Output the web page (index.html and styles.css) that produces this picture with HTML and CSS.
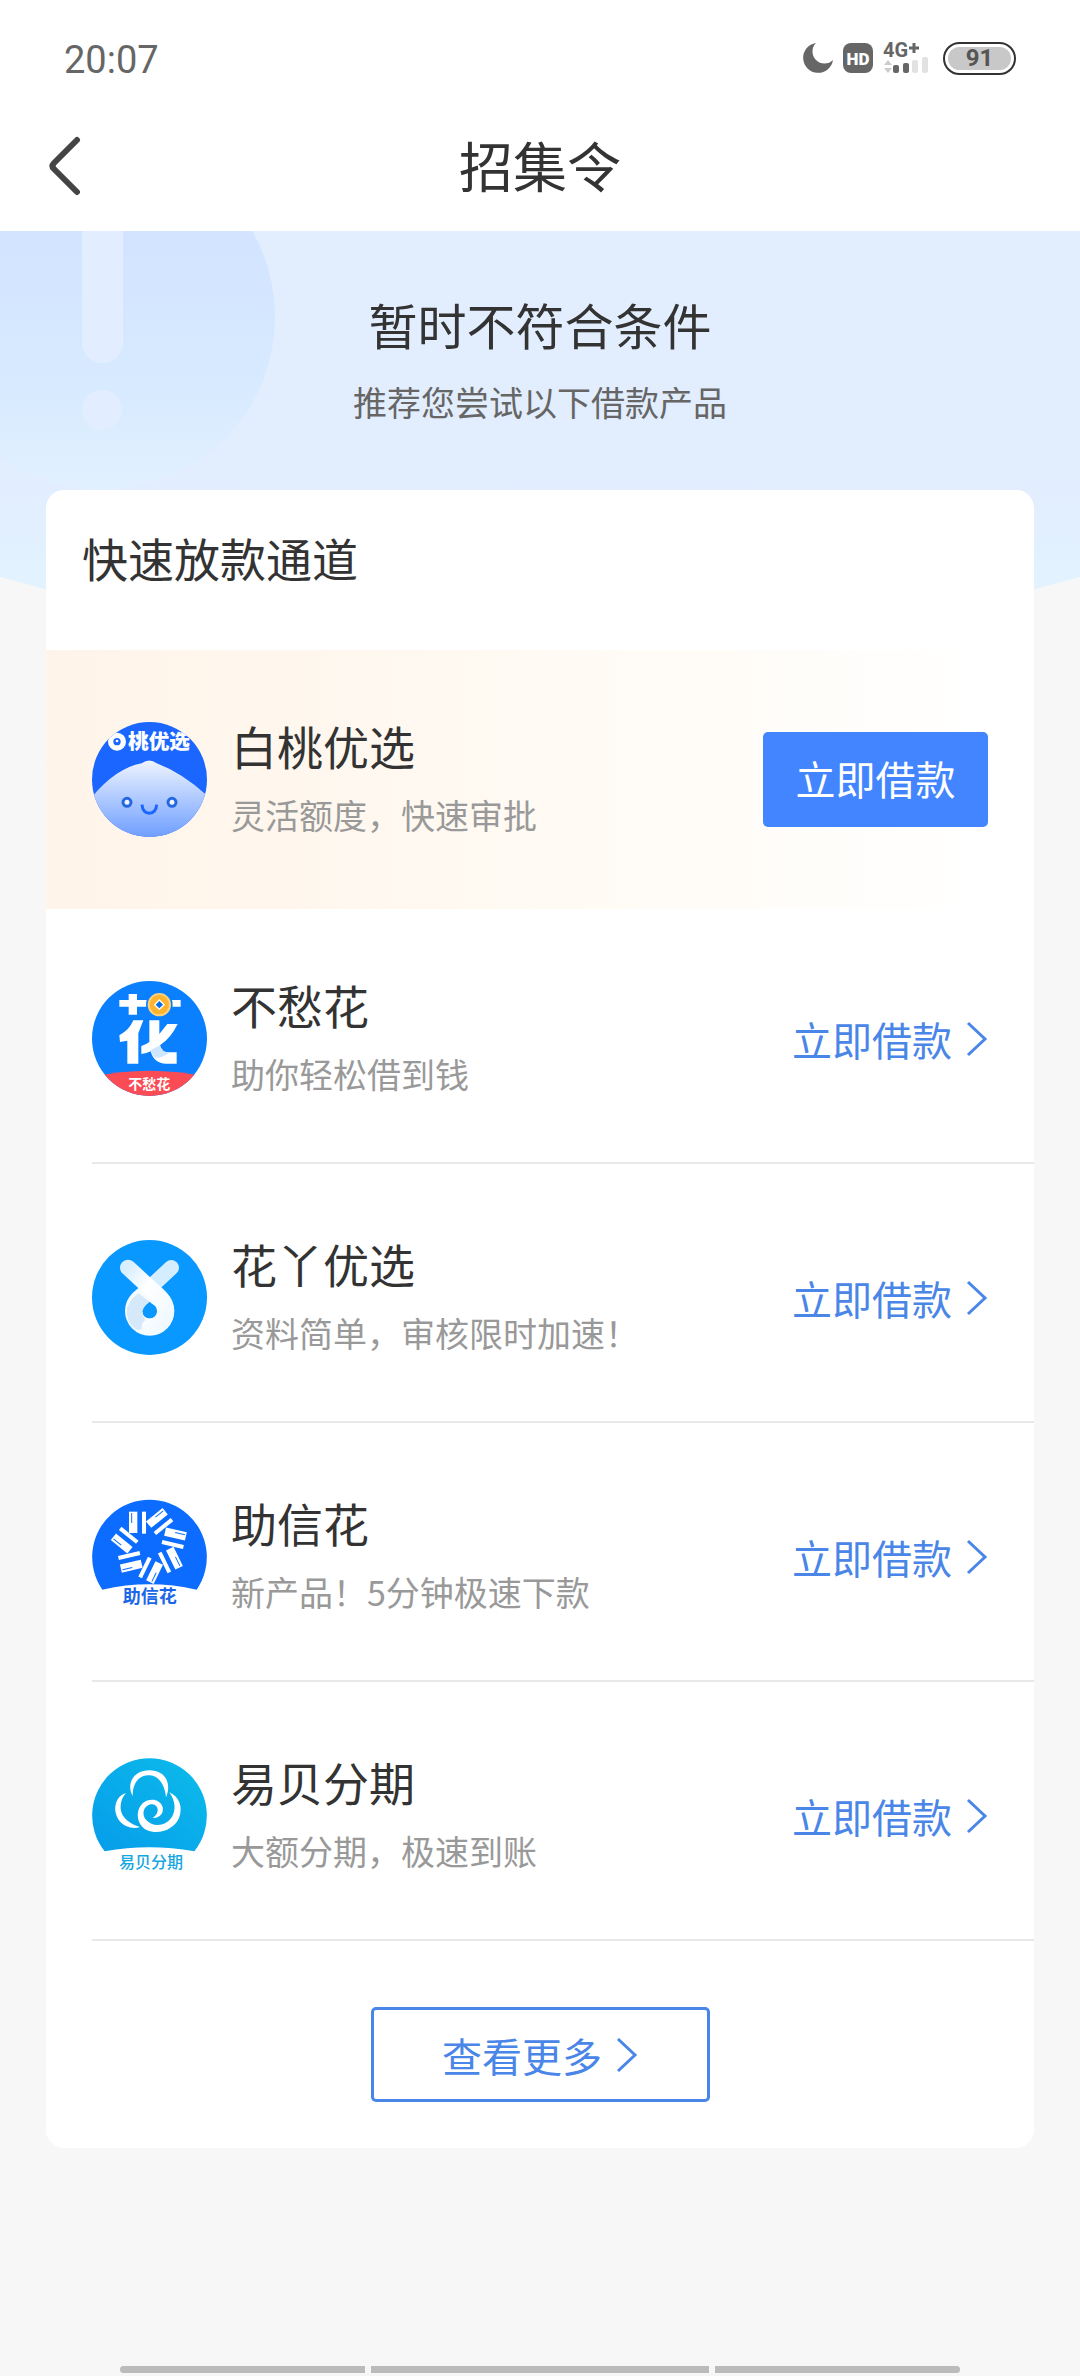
FILE: index.html
```html
<!DOCTYPE html>
<html lang="zh-CN">
<head>
  <meta charset="UTF-8">
  <meta name="viewport" content="width=device-width, initial-scale=1.0">
  <title>招集令</title>
  <link rel="stylesheet" href="styles.css">
</head>
<body>

  <div class="status-bar">
    <div class="time">20:07</div>
    <div class="status-icons">
      <svg width="30" height="30" viewBox="0 0 30 30">
        <path d="M13 0A15 15 0 1 0 30 17A12 12 0 0 1 13 0Z" fill="#666"/>
      </svg>
      <svg width="30" height="30" viewBox="0 0 30 30">
        <rect width="30" height="30" rx="8" fill="#666"/>
        <text x="15" y="22" class="hd">HD</text>
      </svg>
      <svg width="50" height="40" viewBox="0 -4 50 40">
        <text x="0" y="15" class="net">4G</text>
        <path d="M31 1v10M26 6h10" stroke="#666" stroke-width="3"/>
        <path d="M1 23L5 18L9 23ZM1 26L5 31L9 26Z" fill="#ccc"/>
        <g fill="#666">
          <rect x="10" y="23" width="6" height="8" rx="2"/>
          <rect x="20" y="21" width="6" height="10" rx="2"/>
        </g>
        <g fill="#e2e2e2">
          <rect x="29" y="18" width="6" height="13" rx="2"/>
          <rect x="39" y="15" width="6" height="16" rx="2"/>
        </g>
      </svg>
      <div class="battery"><span>91</span></div>
    </div>
  </div>

  <header class="nav">
    <button class="back" aria-label="返回">
      <svg width="34" height="62" viewBox="0 0 34 62">
        <path d="M29 5L6 28Q3 31 6 34L29 57" fill="none" stroke="#444" stroke-width="6" stroke-linecap="round"/>
      </svg>
    </button>
    <h1>招集令</h1>
  </header>

  <section class="hero">
    <svg class="hero-mark" width="280" height="260" viewBox="0 0 280 260">
      <defs>
        <linearGradient id="mark" x1="0" y1="0" x2="0" y2="1">
          <stop offset="0.3" stop-color="#d2e4ff"/>
          <stop offset="0.75" stop-color="#d9ebff"/>
          <stop offset="1" stop-color="#e2f0ff"/>
        </linearGradient>
      </defs>
      <circle cx="102" cy="86" r="173" fill="url(#mark)"/>
      <rect x="82" y="-40" width="41" height="172" rx="20" fill="#e2eeff"/>
      <circle cx="102" cy="179" r="20" fill="#e2eeff"/>
    </svg>
    <h2>暂时不符合条件</h2>
    <p>推荐您尝试以下借款产品</p>
  </section>

  <main class="card">
    <h3>快速放款通道</h3>
    <ul class="list">
      <li class="item hot">
        <svg class="logo" viewBox="36 36 345 345">
          <defs>
            <clipPath id="c1"><circle cx="208.500" cy="208.500" r="172.500"/></clipPath>
            <linearGradient id="peach" x1="0" y1="0" x2="0" y2="1">
              <stop offset="0" stop-color="#eef4ff"/>
              <stop offset="1" stop-color="#6a9bff"/>
            </linearGradient>
          </defs>
          <g clip-path="url(#c1)">
            <rect x="36" y="36" width="345" height="345" fill="#1b66ff"/>
            <path d="M30 268Q105 175 185 160Q208 143 230 160Q310 190 390 265V390H30Z" fill="url(#peach)"/>
            <circle cx="111" cy="95" r="19" fill="none" stroke="#fff" stroke-width="16"/>
            <circle cx="111" cy="93" r="4" fill="#fff"/>
            <text x="144" y="116" class="logo-text white heavy" font-size="62">桃优选</text>
            <circle cx="141" cy="277" r="12" fill="#f2f6ff" stroke="#2468e0" stroke-width="9"/>
            <circle cx="276" cy="277" r="12" fill="#f2f6ff" stroke="#2468e0" stroke-width="9"/>
            <path d="M186 284Q188 309 208 310Q228 309 230 284" fill="none" stroke="#1b66ff" stroke-width="9"/>
          </g>
        </svg>
        <div class="info">
          <div class="name">白桃优选</div>
          <div class="desc">灵活额度，快速审批</div>
        </div>
        <button class="btn">立即借款</button>
      </li>
      <li class="item">
        <svg class="logo" viewBox="36 33 345 345">
          <defs><clipPath id="c2"><circle cx="208.500" cy="205.500" r="172.500"/></clipPath></defs>
          <g clip-path="url(#c2)">
            <rect x="36" y="33" width="345" height="345" fill="#0a80ff"/>
            <path d="M36 320Q208 284 381 320V380H36Z" fill="#fb4b55"/>
            <path d="M118 90H146V72H171V90H302V110H171V134H146V110H118Z" fill="#fff"/>
            <path d="M160 151H190L175 190V281H142V212L120 216L118 196Q148 180 160 151Z" fill="#fff"/>
            <path d="M208 151H238V192L262 162H293Q272 205 240 226Q244 247 262 247H290V281H258Q222 281 212 244Q200 250 184 252V228Q198 224 208 216Z" fill="#fff"/>
            <path d="M212 240L240 226Q246 247 268 248Q240 268 224 262Q216 254 212 240Z" fill="#cfe6ff"/>
            <circle cx="238" cy="104" r="40" fill="#0a80ff"/>
            <circle cx="238" cy="104" r="32" fill="#ffb32e" stroke="#ffd27a" stroke-width="6"/>
            <path d="M238 90L252 104L238 118L224 104Z" fill="#0a6fe0" stroke="#fff" stroke-width="4"/>
            <text x="208" y="356" class="logo-text white mid" font-size="42">不愁花</text>
          </g>
        </svg>
        <div class="info">
          <div class="name">不愁花</div>
          <div class="desc">助你轻松借到钱</div>
        </div>
        <button class="link">立即借款
          <svg class="arrow" viewBox="0 0 22 38"><path d="M2 3L19 19L2 35"/></svg>
        </button>
      </li>
      <li class="item">
        <svg class="logo" viewBox="36 30 345 345">
          <defs>
            <linearGradient id="band" x1="0" y1="0" x2="1" y2="1">
              <stop offset="0" stop-color="#d8efff"/>
              <stop offset="0.4" stop-color="#fff"/>
              <stop offset="1" stop-color="#f0f9ff"/>
            </linearGradient>
          </defs>
          <circle cx="208.500" cy="202.500" r="172.500" fill="#0898ff"/>
          <path d="M274 113L175 205" stroke="#d4edff" stroke-width="46" stroke-linecap="round"/>
          <circle cx="209" cy="243" r="48" fill="none" stroke="#f5fbff" stroke-width="52"/>
          <path d="M175 190Q140 215 140 250Q145 290 175 300Q215 292 235 262L209 281Q188 270 188 243Q195 225 209 215Z" fill="#d6e9fb"/>
          <path d="M144 113L222 185Q257 212 257 243A48 48 0 0 1 209 291" fill="none" stroke="url(#band)" stroke-width="48" stroke-linecap="round"/>
          <path d="M209 215Q230 232 230 244A21 21 0 0 1 188 244Q188 232 209 215Z" fill="#0898ff"/>
        </svg>
        <div class="info">
          <div class="name">花丫优选</div>
          <div class="desc">资料简单，审核限时加速！</div>
        </div>
        <button class="link">立即借款
          <svg class="arrow" viewBox="0 0 22 38"><path d="M2 3L19 19L2 35"/></svg>
        </button>
      </li>
      <li class="item">
        <svg class="logo" viewBox="36 30 345 345">
          <defs>
            <g id="petal">
              <path d="M-62 -100H-37V-36H-62Z"/>
              <path d="M-23 -100H-11V-34H-23Z"/>
              <path d="M-54 -96V-66" stroke="#0b6cff" stroke-width="3"/>
            </g>
          </defs>
          <path d="M67 302A172 172 0 1 1 350 302Q208 270 67 302Z" fill="#0b6cff"/>
          <g fill="#fff">
            <use href="#petal" transform="translate(209 168)"/>
            <use href="#petal" transform="translate(209 168) rotate(51)"/>
            <use href="#petal" transform="translate(209 168) rotate(103)"/>
            <use href="#petal" transform="translate(209 168) rotate(154)"/>
            <use href="#petal" transform="translate(209 168) rotate(206)"/>
            <use href="#petal" transform="translate(209 168) rotate(257)"/>
            <use href="#petal" transform="translate(209 168) rotate(309)"/>
          </g>
          <text x="209" y="342" class="logo-text mid" font-size="54" fill="#1b66e8">助信花</text>
        </svg>
        <div class="info">
          <div class="name">助信花</div>
          <div class="desc">新产品！5分钟极速下款</div>
        </div>
        <button class="link">立即借款
          <svg class="arrow" viewBox="0 0 22 38"><path d="M2 3L19 19L2 35"/></svg>
        </button>
      </li>
      <li class="item">
        <svg class="logo" viewBox="36 42 345 345">
          <defs>
            <linearGradient id="sky" x1="1" y1="0" x2="0" y2="1">
              <stop offset="0" stop-color="#0cbcea"/>
              <stop offset="1" stop-color="#069cea"/>
            </linearGradient>
          </defs>
          <path d="M74 322A172 172 0 1 1 343 322Q208 298 74 322Z" fill="url(#sky)"/>
          <g fill="#fff">
            <path d="M158 156C138 120 160 79 208 79C256 79 276 118 258 160C256 130 240 94 207 94C172 94 158 122 158 156Z"/>
            <path d="M138 147C95 160 95 225 138 246C153 253 168 253 180 249C150 240 125 222 122 195C121 173 128 158 138 147Z"/>
            <path d="M218 222C238 224 252 208 248 190C242 166 212 161 193 174C164 194 168 242 200 258C235 274 281 258 297 222C310 190 298 158 268 145C286 170 289 198 275 220C255 250 215 250 196 225C182 202 198 180 217 181C237 183 240 208 218 222Z"/>
          </g>
          <text x="213" y="372" class="logo-text mid light" font-size="48" fill="#16a6e0">易贝分期</text>
        </svg>
        <div class="info">
          <div class="name">易贝分期</div>
          <div class="desc">大额分期，极速到账</div>
        </div>
        <button class="link">立即借款
          <svg class="arrow" viewBox="0 0 22 38"><path d="M2 3L19 19L2 35"/></svg>
        </button>
      </li>
    </ul>
    <button class="more">查看更多
      <svg class="arrow" viewBox="0 0 22 38"><path d="M2 3L19 19L2 35"/></svg>
    </button>
  </main>

  <div class="gesture-bar">
    <span></span><span class="wide"></span><span></span>
  </div>

</body>
</html>
```
FILE: styles.css
```css
* {
  margin: 0;
  padding: 0;
  box-sizing: border-box;
}

body {
  display: flex;
  flex-direction: column;
  min-height: 100vh;
  background: #f7f7f7;
  color: #333;
  font-family: "Noto Sans CJK SC", sans-serif;
}

h1, h2, h3 {
  font-weight: 400;
}

button {
  border: none;
  background: none;
  font: inherit;
  cursor: pointer;
}

svg {
  display: block;
  flex-shrink: 0;
}

/* status bar */
.status-bar {
  display: flex;
  justify-content: space-between;
  align-items: center;
  height: 116px;
  padding: 0 64px;
  background: #fff;
}

.time {
  font-family: Roboto, sans-serif;
  font-size: 38px;
  line-height: 44px;
  padding-top: 4px;
  color: #666;
}

.status-icons {
  display: flex;
  align-items: center;
  gap: 10px;
}

.hd {
  font: 900 17px Roboto, sans-serif;
  fill: #fff;
  text-anchor: middle;
}

.net {
  font: 700 20px Roboto, sans-serif;
  fill: #666;
}

.battery {
  width: 73px;
  height: 33px;
  padding: 3px;
  border: 2px solid #333;
  border-radius: 17px;
}

.battery span {
  display: block;
  border-radius: 12px;
  background: #c8c8c8;
  color: #555;
  font: 700 24px/23px Roboto, sans-serif;
  text-align: center;
}

/* title bar */
.nav {
  position: relative;
  display: flex;
  justify-content: center;
  align-items: center;
  height: 115px;
  padding-bottom: 18px;
  background: #fff;
}

.nav h1 {
  font-size: 54px;
  line-height: 80px;
}

.back {
  position: absolute;
  left: 48px;
  top: 19px;
}

/* hero */
.hero {
  position: relative;
  height: 416px;
  padding-top: 58px;
  background: linear-gradient(#e2edfe 60%, #e2f3ff 85%);
  clip-path: ellipse(90% 100% at 50% 0);
  text-align: center;
}

.hero-mark {
  position: absolute;
  left: 0;
  top: 0;
}

.hero h2 {
  position: relative;
  font-size: 49px;
  line-height: 70px;
}

.hero p {
  position: relative;
  margin-top: 18px;
  font-size: 34px;
  line-height: 50px;
  color: #666;
}

/* product card */
.card {
  position: relative;
  margin: -157px 46px 46px;
  padding-bottom: 46px;
  border-radius: 18px;
  background: #fff;
}

.card h3 {
  padding: 32px 36px 58px;
  font-size: 46px;
  line-height: 70px;
}

.list {
  list-style: none;
}

.item {
  display: flex;
  align-items: center;
  margin: 0 0 4px 46px;
  padding: 72px 46px 66px 0;
  border-bottom: 2px solid #e8e8e8;
}

.item.hot {
  margin: 0;
  padding: 72px 46px;
  border-bottom: none;
  background: linear-gradient(90deg, #fff4e9, #fffaf3 50%, #fff 96%);
}

.logo {
  width: 115px;
  height: 115px;
}

.logo-text {
  font-family: "Noto Sans CJK SC", sans-serif;
  font-weight: 700;
}

.logo-text.heavy {
  font-weight: 900;
}

.logo-text.light {
  font-weight: 500;
}

.logo-text.white {
  fill: #fff;
}

.logo-text.mid {
  text-anchor: middle;
}

.info {
  flex: 1;
  margin-left: 24px;
}

.name {
  font-size: 46px;
  line-height: 46px;
}

.desc {
  margin-top: 24px;
  font-size: 34px;
  line-height: 45px;
  color: #999;
}

.btn {
  width: 225px;
  height: 95px;
  padding-bottom: 4px;
  border-radius: 5px;
  background: #4285ff;
  color: #fff;
  font-size: 40px;
  line-height: 60px;
}

.link,
.more {
  display: flex;
  justify-content: center;
  align-items: center;
  gap: 14px;
  color: #4a86e8;
  font-size: 40px;
  line-height: 58px;
}

.arrow {
  width: 22px;
  height: 38px;
  fill: none;
  stroke: #4a86e8;
  stroke-width: 3;
}

.more {
  width: 339px;
  height: 95px;
  margin: 66px auto 0;
  border: 3px solid #4a86e8;
  border-radius: 5px;
}

/* system gesture bar */
.gesture-bar {
  display: flex;
  gap: 6px;
  margin: auto 120px 0;
  padding-bottom: 3px;
}

.gesture-bar span {
  flex: 245;
  height: 7px;
  background: #bbb;
}

.gesture-bar .wide {
  flex: 338;
}

.gesture-bar span:first-child {
  border-radius: 4px 0 0 4px;
}

.gesture-bar span:last-child {
  border-radius: 0 4px 4px 0;
}
```
